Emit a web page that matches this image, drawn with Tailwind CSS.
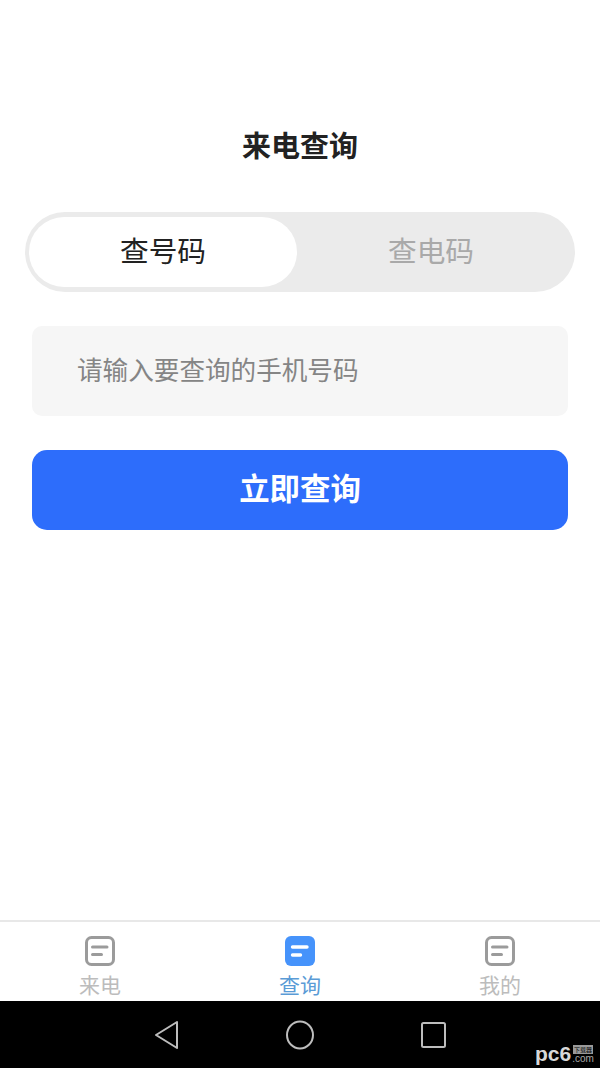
<!DOCTYPE html>
<html lang="zh-CN">
<head>
  <meta charset="UTF-8" />
  <title>来电查询</title>
  <script src="https://cdn.jsdelivr.net/npm/@tailwindcss/browser@4"></script>
</head>
<body class="bg-white font-['Noto_Sans_CJK_SC',sans-serif]">
  <div class="w-[600px] h-[1068px] flex flex-col overflow-hidden">

    <!-- Main -->
    <main class="flex-1 pt-[126px]">
      <h1 class="h-9 leading-9 text-center text-[29px] font-bold text-[#222]">来电查询</h1>

      <!-- Toggle -->
      <div class="mt-[50px] mx-[25px] h-20 rounded-full bg-[#ebebeb] pl-1 py-[5px] flex items-center">
        <div class="w-[268px] h-[70px] pb-[5px] rounded-full bg-white flex items-center justify-center text-[28.7px] text-[#222]">查号码</div>
        <div class="flex-1 pr-[10px] pb-[5px] text-center text-[28.7px] text-[#a9a9a9]">查电码</div>
      </div>

      <!-- Phone input -->
      <input type="text" placeholder="请输入要查询的手机号码"
        class="block mt-[34px] mx-8 w-[536px] h-[90px] rounded-[10px] bg-[#f6f6f6] pl-[45px] pb-[6px] text-[25.6px] placeholder:text-[#858585] outline-none" />

      <button class="block mt-[34px] mx-8 w-[536px] h-20 pb-1 rounded-[15px] bg-[#2d6dfb] text-white text-[30.4px] font-bold">立即查询</button>
    </main>

    <!-- Tab bar -->
    <nav class="h-[81px] border-t-2 border-[#e8e8e8] grid grid-cols-3 pt-[14px]">
      <div class="flex flex-col items-center">
        <svg width="30" height="30" viewBox="0 0 30 30" fill="none">
          <rect x="1.5" y="1.5" width="27" height="27" rx="5" stroke="#9b9b9b" stroke-width="3" />
          <path d="M7.5 11h14.5M7.5 18.5h9" stroke="#9b9b9b" stroke-width="3" stroke-linecap="round" />
        </svg>
        <span class="mt-[3px] text-[21px] leading-[31px] text-[#bcbcbc]">来电</span>
      </div>
      <div class="flex flex-col items-center">
        <svg width="30" height="30" viewBox="0 0 30 30" fill="none">
          <rect width="30" height="30" rx="6" fill="#4693fb" />
          <path d="M7.5 11h14.5M7.5 19h8" stroke="#fff" stroke-width="3.4" stroke-linecap="round" />
        </svg>
        <span class="mt-[3px] text-[21px] leading-[31px] text-[#5a9bd6]">查询</span>
      </div>
      <div class="flex flex-col items-center">
        <svg width="30" height="30" viewBox="0 0 30 30" fill="none">
          <rect x="1.5" y="1.5" width="27" height="27" rx="5" stroke="#9b9b9b" stroke-width="3" />
          <path d="M7.5 11h14.5M7.5 18.5h9" stroke="#9b9b9b" stroke-width="3" stroke-linecap="round" />
        </svg>
        <span class="mt-[3px] text-[21px] leading-[31px] text-[#bcbcbc]">我的</span>
      </div>
    </nav>

    <!-- Android nav bar -->
    <div class="relative h-[67px] bg-black shrink-0">
      <div class="h-full flex items-center justify-center gap-[105px]">
        <svg width="28" height="32" viewBox="0 0 28 32" fill="none">
          <path d="M24 3 3 16l21 13z" stroke="#bdbdbd" stroke-width="2" stroke-linejoin="round" />
        </svg>
        <svg width="28" height="32" viewBox="0 0 28 32" fill="none">
          <ellipse cx="14" cy="16" rx="13" ry="13.5" stroke="#bdbdbd" stroke-width="2" />
        </svg>
        <svg width="28" height="32" viewBox="0 0 28 32" fill="none">
          <rect x="3" y="4" width="23" height="24" rx="1.5" stroke="#bdbdbd" stroke-width="2" />
        </svg>
      </div>
      <!-- watermark -->
      <div class="absolute left-[535px] top-[43px] flex items-end text-[#d8d8d8] font-['Liberation_Sans',sans-serif]">
        <span class="text-[21px] leading-[20px] font-bold">pc6</span>
        <span class="ml-px flex flex-col items-center">
          <span class="w-[20px] h-[9px] overflow-hidden bg-[#999] text-black text-[6px] leading-[9px] text-center font-['Noto_Sans_CJK_SC',sans-serif]">下载器</span>
          <span class="text-[10px] leading-[10px] text-[#aaa]">.com</span>
        </span>
      </div>
    </div>
  </div>
</body>
</html>
